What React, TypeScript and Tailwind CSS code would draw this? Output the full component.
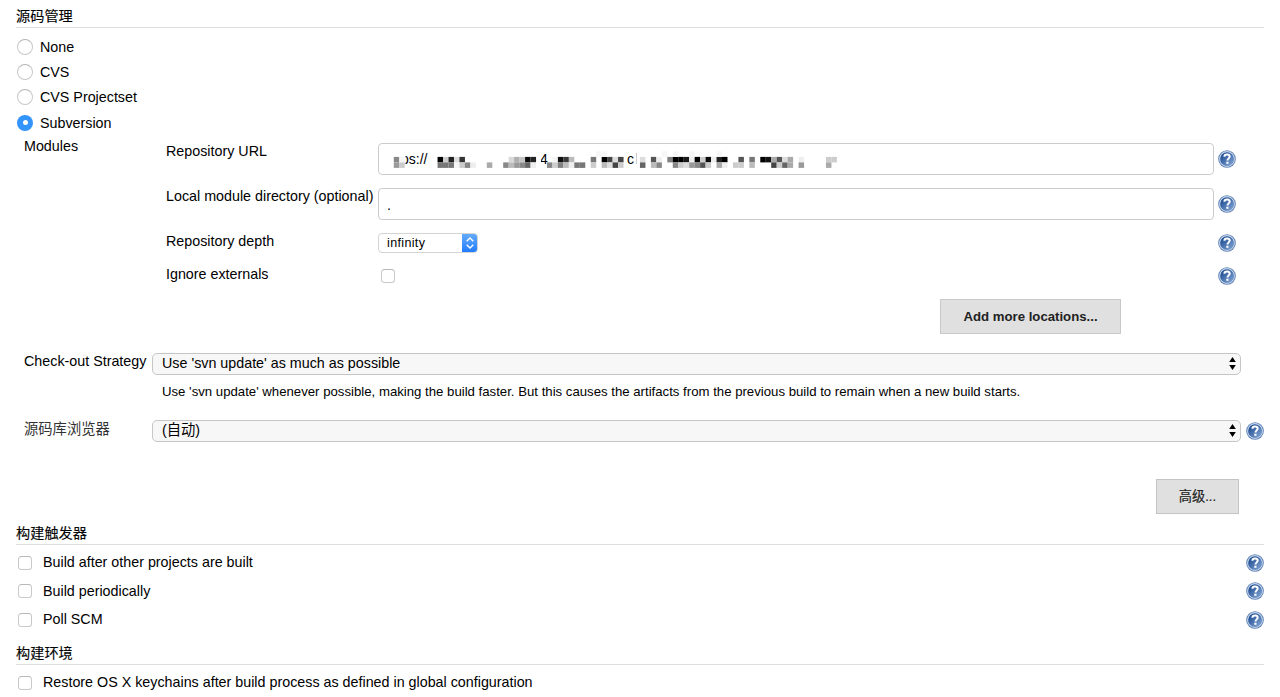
import React from "react";

type Cell = [col: number, row: number, color: string];

const COLS: [number, string, string][] = [
  [0, "#888", "#9a9a9a"], [1, "#f6f6f6", "#ccc"],
  [8, "#000", "#777"], [9, "#ccc", "#777"], [10, "#222", "#777"], [11, "#ddd", "#f6f6f6"],
  [12, "#333", "#ccc"], [13, "", "#888"], [14, "", "#eee"], [17, "", "#aaa"],
  [20, "", "#888"], [21, "#d8d8d8", "#bbb"], [22, "#b0b0b0", "#999"], [23, "#c4c4c4", "#888"],
  [24, "#0a0a0a", "#666"], [25, "#222", "#eee"], [28, "", "#888"], [29, "#f4f4f4", "#ccc"],
  [30, "#111", "#808080"], [31, "#3a3a3a", "#bbb"], [32, "#bbb", "#eee"], [33, "", "#777"],
  [34, "", "#777"], [36, "#777", "#ccc"], [38, "#000", "#bbb"], [39, "#444", "#ddd"],
  [40, "#ddd", "#444"], [41, "#444", "#ccc"], [45, "#ddd", "#666"],
  [47, "#555", "#bbb"], [48, "#eee", "#888"], [50, "#808080", ""], [51, "#000", "#888"],
  [52, "#000", "#ccc"], [53, "#1a1a1a", "#ddd"], [54, "#eee", "#999"], [55, "#000", "#888"],
  [56, "#ccc", "#555"], [57, "#0a0a0a", "#ccc"], [58, "#eee", ""], [59, "#222", "#aaa"],
  [60, "#000", "#eee"], [62, "", "#ccc"], [63, "#555", "#ccc"], [65, "#777", "#bbb"],
  [67, "#000", ""], [68, "#111", ""], [69, "#aaa", "#444"], [70, "#555", "#ccc"],
  [71, "#ddd", "#666"], [72, "#aaa", "#aaa"], [74, "#eee", "#999"], [79, "#ccc", "#aaa"],
  [80, "#ccc", ""],
];

const CELLS: Cell[] = [
  ...COLS.flatMap(([c, top, bottom]) => [[c, 1, top], [c, 2, bottom]] as Cell[]).filter(([, , f]) => f !== ""),
  ...[37, 38, 49, 51, 54, 59].map((c): Cell => [c, 0, "#f6f6f6"]),
];

function Redaction() {
  return (
    <svg className="absolute left-0 top-0" width="480" height="30" viewBox="0 0 480 30" aria-hidden="true">
      <rect x="10" y="4" width="16.5" height="22" fill="#fff" />
      <rect x="157" y="4" width="5" height="22" fill="#fff" />
      <rect x="257" y="9" width="1" height="11" fill="#ccc" />
      {CELLS.map(([c, r, f]) => (
        <rect key={`${c}-${r}`} x={14.8 + c * 5.47} y={7.4 + r * 5.5} width={5.5} height={5.5} fill={f} />
      ))}
    </svg>
  );
}

function Help() {
  return (
    <svg className="block h-[18px] w-[18px] shrink-0" viewBox="0 0 18 18" aria-hidden="true">
      <defs>
        <linearGradient id="helpFill" x1="0" y1="0" x2="1" y2="1">
          <stop offset="0.1" stopColor="#1c4a90" />
          <stop offset="1" stopColor="#86a9d8" />
        </linearGradient>
      </defs>
      <circle cx="9" cy="9" r="8.8" fill="#5f82b5" />
      <circle cx="9" cy="9" r="7.4" fill="none" stroke="#c3d3ea" strokeWidth="1.1" />
      <circle cx="9" cy="9" r="6.6" fill="url(#helpFill)" />
      <path d="M6.4 6.8C6.4 5.1 7.5 4.5 9 4.5s2.7.7 2.7 2.1c0 1.7-2.2 1.9-2.2 3.9" fill="none" stroke="#fff" strokeWidth="2" />
      <rect x="8.3" y="11.7" width="2.2" height="2.1" fill="#fff" />
    </svg>
  );
}

function Header({ children, className = "" }: { children: React.ReactNode; className?: string }) {
  return (
    <h2 className={`flex items-center border-b border-[#dedede] text-[14.2px] leading-none font-normal [-webkit-text-stroke:0.15px_#222] ${className}`}>
      {children}
    </h2>
  );
}

function Radio({ label, checked = false }: { label: string; checked?: boolean }) {
  return (
    <div className="flex h-[25.2px] items-center gap-[7px] pl-px">
      {checked ? (
        <span className="flex h-4 w-4 items-center justify-center rounded-full bg-[#3395fb]">
          <span className="h-[5px] w-[5px] rounded-full bg-white" />
        </span>
      ) : (
        <span className="h-4 w-4 rounded-full border border-[#c8c8c8] border-t-[#b4b4b4] bg-white" />
      )}
      <span>{label}</span>
    </div>
  );
}

function Box() {
  return <span className="block h-[14px] w-[14px] shrink-0 rounded-[3.5px] border border-[#c9c9c9] border-t-[#b8b8b8] bg-white" />;
}

function CheckRow({ label, help = false }: { label: string; help?: boolean }) {
  return (
    <div className="flex h-[28.5px] items-center pl-[2px]">
      <Box />
      <span className="ml-[11px] flex-1 pb-px">{label}</span>
      {help && <Help />}
    </div>
  );
}

function WideSelect({ value }: { value: string }) {
  return (
    <div className="flex h-[22px] w-[1089px] items-center justify-between rounded-[5px] border border-[#c6c6c6] bg-[#f7f7f7] pr-[4px] pl-[9px]">
      <span className="pb-px">{value}</span>
      <svg width="7" height="13" viewBox="0 0 7 13" aria-hidden="true">
        <path d="M3.5 0L6.8 5H.2zM3.5 13L.2 8h6.6z" fill="#000" />
      </svg>
    </div>
  );
}

export default function App() {
  return (
    <main className="h-[697px] w-[1280px] overflow-hidden bg-white pr-4 pl-4 font-['Liberation_Sans','Noto_Sans_CJK_SC',sans-serif] text-[14.3px] leading-[18px] whitespace-nowrap text-black">
      <Header className="h-7 pt-[5px]">源码管理</Header>
      <div className="h-[107.7px] pt-[6.5px]">
        <Radio label="None" />
        <Radio label="CVS" />
        <Radio label="CVS Projectset" />
        <Radio label="Subversion" checked />
      </div>

      <div className="flex h-[163.3px] pl-2">
        <div className="w-[142px] pt-[1px]">Modules</div>
        <div className="flex flex-col pt-[7.3px]">
          <div className="flex h-[45px]">
            <span className="-mt-px w-[212px]">Repository URL</span>
            <div className="relative h-8 w-[836px] rounded-[4px] border border-[#ccc] text-[14px]">
              <span className="absolute top-[6px] left-[22px]">ps://</span>
              <span className="absolute top-[6px] left-[161px]">4</span>
              <span className="absolute top-[6px] left-[248px]">c</span>
              <Redaction />
            </div>
            <div className="pt-[7.5px] pl-1"><Help /></div>
          </div>
          <div className="flex h-[45px]">
            <span className="-mt-px w-[212px]">Local module directory (optional)</span>
            <div className="h-8 w-[836px] rounded-[4px] border border-[#ccc] pt-[7px] pl-[8px]">.</div>
            <div className="pt-[7.5px] pl-1"><Help /></div>
          </div>
          <div className="flex h-[33px]">
            <span className="-mt-px w-[212px]">Repository depth</span>
            <div className="flex h-5 w-[100px] items-center justify-between overflow-hidden rounded-[4px] border border-[#d4d4d4] pl-2 text-[12.5px]">
              <span className="tracking-[0.35px]">infinity</span>
              <span className="-mr-px flex h-5 w-4 items-center justify-center bg-linear-to-b from-[#66adfb] to-[#1a79fc]">
                <svg width="10" height="14" viewBox="0 0 10 14" fill="none" stroke="#fff" strokeWidth="1.4" aria-hidden="true">
                  <path d="M1.7 5.2L5 2l3.3 3.2M1.7 8.8L5 12l3.3-3.2" />
                </svg>
              </span>
            </div>
            <div className="ml-auto pt-[1px]"><Help /></div>
          </div>
          <div className="flex">
            <span className="-mt-px w-[212px]">Ignore externals</span>
            <div className="pt-[3px] pl-[3px]"><Box /></div>
            <div className="ml-auto pt-[1px]"><Help /></div>
          </div>
        </div>
      </div>

      <div className="flex h-[54px] pl-[924px]">
        <button className="h-[35px] w-[181px] border border-[#c9c9c9] bg-[#e0e0e0] pt-px text-[13.2px] font-bold text-[#222]">
          Add more locations...
        </button>
      </div>

      <div className="flex pl-2">
        <span className="-mt-px w-[128px]">Check-out Strategy</span>
        <WideSelect value="Use 'svn update' as much as possible" />
      </div>
      <p className="h-[45px] pt-[8px] pl-[146px] text-[13.2px]">
        Use 'svn update' whenever possible, making the build faster. But this causes the artifacts from the previous build to remain when a new build starts.
      </p>
      <div className="flex h-[59.5px] pl-2">
        <span className="w-[128px] text-[#333]">源码库浏览器</span>
        <WideSelect value="(自动)" />
        <div className="pt-[2px] pl-[5px]"><Help /></div>
      </div>
      <div className="flex h-[44px] pl-[1140px]">
        <button className="h-[35px] w-[83px] border border-[#c4c4c4] bg-[#e0e0e0] text-[13.2px] font-normal text-[#222] [-webkit-text-stroke:0.2px_#222]">高级...</button>
      </div>

      <Header className="h-[21.5px] pb-[2px]">构建触发器</Header>
      <div className="pt-[3.3px]">
        <CheckRow label="Build after other projects are built" help />
        <CheckRow label="Build periodically" help />
        <CheckRow label="Poll SCM" help />
      </div>
      <Header className="mt-[8.7px] h-[22.6px] pb-[1px]">构建环境</Header>
      <div className="pt-[3.3px]">
        <CheckRow label="Restore OS X keychains after build process as defined in global configuration" />
      </div>
    </main>
  );
}
